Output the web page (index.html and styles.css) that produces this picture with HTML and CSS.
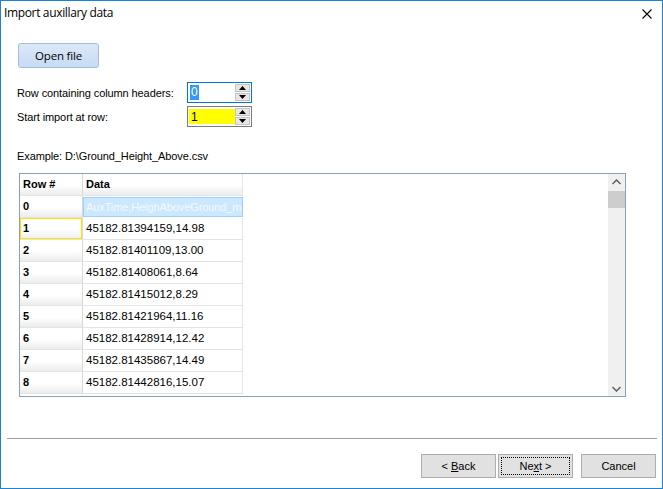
FILE: index.html
```html
<!DOCTYPE html>
<html>
<head>
<meta charset="utf-8">
<link rel="stylesheet" href="styles.css">
</head>
<body>
<div class="window">
  <div class="titlebar">
    <span class="title">Import auxillary data</span>
    <svg class="close" width="10" height="10" viewBox="0 0 10 10"><path d="M0.5 0.5 L9.5 9.5 M9.5 0.5 L0.5 9.5" stroke="#000" stroke-width="1.1" fill="none"/></svg>
  </div>
  <div class="content">
    <button class="open-btn">Open file</button>
    <div class="field-row first">
      <span class="label">Row containing column headers:</span>
      <div class="spin focused">
        <div class="spin-text"><span class="sel">0</span></div>
        <div class="spin-btns">
          <div class="spin-btn"><svg width="7" height="4" viewBox="0 0 7 4"><path d="M3.5 0 L7 4 L0 4 Z" fill="#000"/></svg></div>
          <div class="spin-btn"><svg width="7" height="4" viewBox="0 0 7 4"><path d="M0 0 L7 0 L3.5 4 Z" fill="#000"/></svg></div>
        </div>
      </div>
    </div>
    <div class="field-row">
      <span class="label">Start import at row:</span>
      <div class="spin">
        <div class="spin-text yellow">1</div>
        <div class="spin-btns">
          <div class="spin-btn"><svg width="7" height="4" viewBox="0 0 7 4"><path d="M3.5 0 L7 4 L0 4 Z" fill="#000"/></svg></div>
          <div class="spin-btn"><svg width="7" height="4" viewBox="0 0 7 4"><path d="M0 0 L7 0 L3.5 4 Z" fill="#000"/></svg></div>
        </div>
      </div>
    </div>
    <div class="example">Example: D:\Ground_Height_Above.csv</div>
    <div class="grid">
      <div class="grid-body">
        <div class="row head"><div class="rh">Row #</div><div class="dc">Data</div></div>
        <div class="row"><div class="rh">0</div><div class="dc selected">AuxTime,HeighAboveGround_m</div></div>
        <div class="row"><div class="rh focus">1</div><div class="dc">45182.81394159,14.98</div></div>
        <div class="row"><div class="rh">2</div><div class="dc">45182.81401109,13.00</div></div>
        <div class="row"><div class="rh">3</div><div class="dc">45182.81408061,8.64</div></div>
        <div class="row"><div class="rh">4</div><div class="dc">45182.81415012,8.29</div></div>
        <div class="row"><div class="rh">5</div><div class="dc">45182.81421964,11.16</div></div>
        <div class="row"><div class="rh">6</div><div class="dc">45182.81428914,12.42</div></div>
        <div class="row"><div class="rh">7</div><div class="dc">45182.81435867,14.49</div></div>
        <div class="row"><div class="rh">8</div><div class="dc">45182.81442816,15.07</div></div>
      </div>
      <div class="vscroll">
        <svg class="arrow" width="9" height="6" viewBox="0 0 9 6"><path d="M0.5 5 L4.5 1 L8.5 5" stroke="#606060" stroke-width="1.5" fill="none"/></svg>
        <div class="thumb"></div>
        <div class="track"></div>
        <svg class="arrow" width="9" height="6" viewBox="0 0 9 6"><path d="M0.5 1 L4.5 5 L8.5 1" stroke="#606060" stroke-width="1.5" fill="none"/></svg>
      </div>
    </div>
    <div class="separator"></div>
    <div class="buttons">
      <button class="btn"><span class="btn-label">&lt; <u>B</u>ack</span></button>
      <button class="btn next"><span class="focusrect"><span class="btn-label">Ne<u>x</u>t &gt;</span></span></button>
      <button class="btn cancel"><span class="btn-label">Cancel</span></button>
    </div>
  </div>
</div>
</body>
</html>
```
FILE: styles.css
```css
html, body { margin: 0; padding: 0; background: #fff; }
.window {
  width: 663px; height: 489px; box-sizing: border-box;
  border: 1px solid #1883d7; background: #fff;
  display: flex; flex-direction: column;
  font-family: "Liberation Sans", Arial, sans-serif; font-size: 11px; color: #000;
}
.titlebar {
  height: 30px; box-sizing: border-box;
  display: flex; justify-content: space-between; align-items: flex-start;
  padding: 4px 10px 0 3px;
}
.title { font-family: "Open Sans", "Liberation Sans", sans-serif; font-size: 12px; line-height: 16px; letter-spacing: -0.35px; }
.close { margin-top: 4px; }
.content { display: flex; flex-direction: column; }
.open-btn {
  margin: 12px 0 0 17px; width: 81px; height: 25px; box-sizing: border-box;
  border: 1px solid #a6bedc; border-radius: 3px;
  background: linear-gradient(#dbe8f8, #c7dbf3);
  font-family: "Open Sans", "Liberation Sans", sans-serif; font-size: 11.5px; letter-spacing: -0.2px; color: #000; padding: 0;
}
.field-row { display: flex; align-items: center; margin: 3px 0 0 16px; height: 21px; }
.field-row.first { margin-top: 14px; }
.label { width: 170px; letter-spacing: -0.1px; }
.spin {
  width: 65px; height: 21px; box-sizing: border-box; border: 1px solid #7a7a7a;
  display: flex; padding: 1px; background: #fff;
}
.spin.focused { border-color: #0078d7; }
.spin-text { flex: 1; display: flex; align-items: center; padding-left: 1px; font-size: 12px; }
.spin-text.yellow { background: #ffff00; margin: 1px 0 1px 0; padding-left: 2px; }
.sel { background: #3399ff; color: #fff; display: inline-block; line-height: 15px; padding: 0 1px; }
.spin-btns { width: 15px; display: flex; flex-direction: column; gap: 1px; }
.spin-btn {
  flex: 1; background: #e6e6e6; border: 1px solid #c4c4c4;
  display: flex; align-items: center; justify-content: center;
}
.example { margin: 21px 0 0 16px; line-height: 16px; letter-spacing: -0.1px; }
.grid {
  margin: 9px 0 0 18px; width: 607px; height: 224px; box-sizing: border-box;
  border: 1px solid #8a9fb8; display: flex; overflow: hidden;
}
.grid-body { flex: 1; display: flex; flex-direction: column; }
.row { display: flex; height: 22px; flex: none; }
.rh {
  width: 63px; box-sizing: border-box; border-right: 1px solid #d9d9d9; border-bottom: 1px solid #e4e4e4;
  background: linear-gradient(#fff 0, #fff 55%, #ececec 100%);
  font-weight: bold; padding: 0 3px; line-height: 21px;
}
.rh.focus { box-shadow: inset 0 0 0 1px #f5e600; }
.dc {
  width: 160px; box-sizing: border-box; border-right: 1px solid #e4e4e4; border-bottom: 1px solid #e4e4e4;
  padding: 0 3px; line-height: 21px; white-space: nowrap; overflow: hidden; font-size: 11.5px;
}
.head .dc { background: linear-gradient(#fff 0, #fff 55%, #ececec 100%); font-weight: bold; font-size: 11px; }
.dc.selected { background: #cce8ff; border: 1px solid #99d1ff; color: #f4f9ff; line-height: 19px; margin: 1px 0 1px 0; height: 20px; padding: 0 2px; font-size: 11px; letter-spacing: -0.1px; }
.vscroll { width: 17px; background: #f0f0f0; display: flex; flex-direction: column; align-items: center; }
.arrow { margin: 5px 0 6px; }
.arrow:last-child { margin: 6px 0 4px; }
.thumb { width: 17px; height: 17px; background: #cdcdcd; }
.track { flex: 1; }
.separator { margin: 41px 0 0 6px; width: 650px; height: 1px; background: #a0a0a0; }
.buttons { display: flex; justify-content: flex-end; margin: 15px 6px 0 0; gap: 2px; }
.btn {
  width: 75px; height: 24px; box-sizing: border-box; border: 1px solid #adadad; background: #e1e1e1;
  font-family: "Liberation Sans", Arial, sans-serif; font-size: 11px; color: #000; padding: 0;
  display: flex; align-items: center; justify-content: center;
}
.btn-label { white-space: pre; }
.btn.next { padding: 2px; }
.focusrect { flex: 1; align-self: stretch; border: 1px dotted #000; display: flex; align-items: center; justify-content: center; }
.btn.cancel { margin-left: 6px; }
```
